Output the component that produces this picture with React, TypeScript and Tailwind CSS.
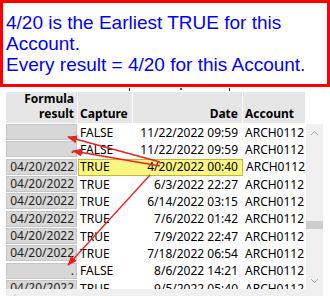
import React from "react";

type Row = {
  result: string;
  capture: string;
  date: string;
  account: string;
  hot?: boolean;
};

const rows: Row[] = [
  { result: "", capture: "FALSE", date: "11/22/2022 09:59", account: "ARCH0112" },
  { result: ".", capture: "FALSE", date: "11/22/2022 09:59", account: "ARCH0112" },
  { result: "04/20/2022", capture: "TRUE", date: "4/20/2022 00:40", account: "ARCH0112", hot: true },
  { result: "04/20/2022", capture: "TRUE", date: "6/3/2022 22:27", account: "ARCH0112" },
  { result: "04/20/2022", capture: "TRUE", date: "6/14/2022 03:15", account: "ARCH0112" },
  { result: "04/20/2022", capture: "TRUE", date: "7/6/2022 01:42", account: "ARCH0112" },
  { result: "04/20/2022", capture: "TRUE", date: "7/9/2022 22:47", account: "ARCH0112" },
  { result: "04/20/2022", capture: "TRUE", date: "7/18/2022 06:54", account: "ARCH0112" },
  { result: ".", capture: "FALSE", date: "8/6/2022 14:21", account: "ARCH0112" },
  { result: "04/20/2022", capture: "TRUE", date: "9/5/2022 05:40", account: "ARCH0112" },
];

const cellFont = { fontFamily: '"Noto Sans", "Open Sans", sans-serif' };

function DataRow({ r }: { r: Row }) {
  return (
    <div className="flex h-[17.33px] shrink-0 text-[12px] leading-none text-black">
      <div className="w-[71px] shrink-0 pb-[1.33px]">
        <div className="flex h-full items-center justify-end border border-[#c6c6c6] bg-[#d7d7d7] pr-[2px] text-[#1e1e1e]">
          {r.result}
        </div>
      </div>
      {r.hot ? (
        <div className="ml-px flex h-full w-[165px] shrink-0 border border-[#c2ba30] bg-[#faf682]">
          <div className="flex w-[53px] shrink-0 items-center pl-[1px]">{r.capture}</div>
          <div className="flex w-[110px] shrink-0 items-center justify-end pr-[4px]">{r.date}</div>
        </div>
      ) : (
        <>
          <div className="ml-px flex w-[54px] shrink-0 items-center pl-[2px]">{r.capture}</div>
          <div className="ml-px flex w-[109px] shrink-0 items-center justify-end pr-[4px]">{r.date}</div>
        </>
      )}
      <div className="ml-px flex w-[62px] shrink-0 items-center pl-[2px]">{r.account}</div>
    </div>
  );
}

function Arrows() {
  const red = "#f01e1e";
  return (
    <svg
      className="pointer-events-none absolute left-0 top-0"
      width="330"
      height="296"
      viewBox="0 0 330 296"
    >
      <defs>
        <marker id="head" viewBox="0 0 10 8" refX="9" refY="4" markerWidth="10" markerHeight="8" markerUnits="userSpaceOnUse" orient="auto">
          <path d="M0 0 L10 4 L0 8 Z" fill={red} />
        </marker>
      </defs>
      <line x1="160" y1="162" x2="68" y2="137" stroke={red} strokeWidth="1.3" markerEnd="url(#head)" />
      <line x1="160" y1="166" x2="73" y2="151" stroke={red} strokeWidth="1.3" markerEnd="url(#head)" />
      <line x1="150" y1="175" x2="68" y2="265" stroke={red} strokeWidth="1.3" markerEnd="url(#head)" />
    </svg>
  );
}

export default function App() {
  return (
    <div className="relative h-[296px] w-[330px] overflow-hidden bg-white">
      {/* note box */}
      <div
        className="h-[87px] border-[3px] border-[#ff0000] pl-[3px] pt-[9px] text-[19px] leading-[21px] text-[#0000ff]"
        style={{ fontFamily: '"Liberation Sans", Arial, sans-serif' }}
      >
        <div>4/20 is the Earliest TRUE for this</div>
        <div>Account.</div>
        <div>Every result = 4/20 for this Account.</div>
      </div>

      {/* thin strip above the grid */}
      <div className="relative h-[5px]">
        <div className="absolute left-[129px] top-[1px] h-[3px] w-px bg-[#333]" />
        <div className="absolute left-[180px] top-[1px] h-[2px] w-[2px] bg-[#555]" />
        <div className="absolute left-[229px] top-[1px] h-[3px] w-px bg-[#333]" />
      </div>

      <div className="flex pl-[6px]" style={cellFont}>
        <div className="flex w-[299px] shrink-0 flex-col">
          {/* header */}
          <div className="flex h-[31px] shrink-0 text-[12px] font-bold leading-[15px] text-black">
            <div className="flex w-[71px] shrink-0 flex-col items-end justify-end bg-[#e6e6e6] pb-[2px] pr-[3px] text-right">
              <span>Formula</span>
              <span>result</span>
            </div>
            <div className="ml-px flex w-[54px] shrink-0 items-end bg-[#e6e6e6] pb-[2px] pl-[2px]">Capture</div>
            <div className="ml-px flex w-[109px] shrink-0 items-end justify-end bg-[#e6e6e6] pb-[2px] pr-[4px]">Date</div>
            <div className="ml-px flex w-[62px] shrink-0 items-end bg-[#e6e6e6] pb-[2px] pl-[2px]">Account</div>
          </div>
          {/* body */}
          <div className="mt-px flex h-[165px] flex-col overflow-hidden">
            {rows.map((r, i) => (
              <DataRow key={i} r={r} />
            ))}
          </div>
          {/* horizontal scrollbar */}
          <div className="relative h-[17px] w-[317px] bg-[#f0f0f0]">
            <svg className="absolute left-[5px] top-[4px]" width="8" height="8" viewBox="0 0 8 8">
              <path d="M5 1 L2 4 L5 7" fill="none" stroke="#c4c4c4" strokeWidth="1" />
            </svg>
          </div>
        </div>

        {/* vertical scrollbar */}
        <div className="ml-px mt-[32px] flex h-[165px] w-[17px] shrink-0 flex-col items-center bg-[#f0f0f0]">
          <svg className="mt-[6px]" width="9" height="6" viewBox="0 0 9 6">
            <path d="M1 5 L4.5 1.5 L8 5" fill="none" stroke="#a6a6a6" strokeWidth="1" />
          </svg>
          <div className="mt-[85px] h-[8px] w-full bg-[#cdcdcd]" />
          <div className="flex-1" />
          <svg className="mb-[5px]" width="9" height="6" viewBox="0 0 9 6">
            <path d="M1 1 L4.5 4.5 L8 1" fill="none" stroke="#a6a6a6" strokeWidth="1" />
          </svg>
        </div>
      </div>

      <Arrows />
    </div>
  );
}
